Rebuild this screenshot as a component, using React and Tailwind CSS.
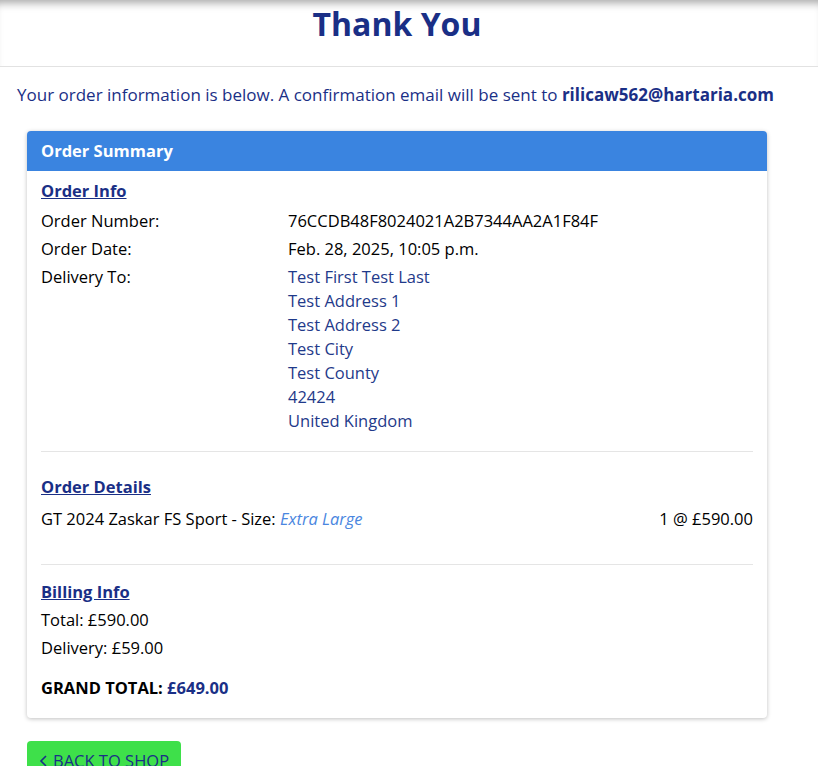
export default function App() {
  const address = ['Test First Test Last', 'Test Address 1', 'Test Address 2', 'Test City', 'Test County', '42424', 'United Kingdom'];

  return (
    <div className="min-h-[766px] bg-white text-black" style={{ fontFamily: '"Open Sans", "Noto Sans", sans-serif' }}>
      {/* title */}
      <div className="shadow-[inset_0_9px_8px_-6px_rgba(0,0,0,0.35)] border-b border-[#e2e2e2] h-[67px] pt-[2px] pr-[24px] text-center">
        <h1 className="text-[32px] font-bold text-[#1a2f86] leading-[44px]">Thank You</h1>
      </div>

      <p className="px-[17px] pt-[16px] text-[17px] text-[#1a2f86] leading-[24px] whitespace-nowrap">
        Your order information is below. A confirmation email will be sent to <strong className="font-bold">rilicaw562@hartaria.com</strong>
      </p>

      {/* card */}
      <div className="mx-[27px] mt-[24px] w-[740px] rounded-[4px] bg-white shadow-[0_1px_4px_rgba(0,0,0,0.25)] overflow-hidden">
        <div className="bg-[#3a84e0] h-[40px] px-[14px] flex items-center text-white font-bold text-[16.5px]">Order Summary</div>

        <div className="px-[14px] pt-[8px] pb-[16px] text-[16.5px]">
          <h2 className="text-[16.5px] font-bold text-[#1a2f86] underline leading-[24px]">Order Info</h2>
          <div className="mt-[4px] grid grid-cols-[247px_1fr] leading-[28px]">
            <span>Order Number:</span>
            <span>76CCDB48F8024021A2B7344AA2A1F84F</span>
            <span>Order Date:</span>
            <span className="font-medium">Feb. 28, 2025, 10:05 p.m.</span>
            <span>Delivery To:</span>
            <div className="text-[#1f3a8a] leading-[24px] pt-[2px]">
              {address.map((l) => <div key={l}>{l}</div>)}
            </div>
          </div>

          <hr className="mt-[18px] border-[#e5e5e5]" />

          <h2 className="mt-[23px] text-[16.5px] font-bold text-[#1a2f86] underline leading-[24px]">Order Details</h2>
          <div className="mt-[6px] flex justify-between leading-[28px]">
            <span>GT 2024 Zaskar FS Sport - Size: <em className="text-[#4a86e0]">Extra Large</em></span>
            <span>1 @ £590.00</span>
          </div>

          <hr className="mt-[31px] border-[#e5e5e5]" />

          <h2 className="mt-[15px] text-[16.5px] font-bold text-[#1a2f86] underline leading-[24px]">Billing Info</h2>
          <div className="mt-[2px] leading-[28px]">
            <div>Total: £590.00</div>
            <div>Delivery: £59.00</div>
            <div className="mt-[12px] font-bold">GRAND TOTAL: <span className="text-[#1a2f86]">£649.00</span></div>
          </div>
        </div>
      </div>

      <button className="ml-[27px] mt-[23px] h-[40px] w-[154px] pl-[12px] rounded-[4px] bg-[#3ee04a] text-[#1a2f86] text-[16.5px] flex items-center gap-[4px]">
        <svg width="10" height="14" viewBox="0 0 10 14" fill="none" stroke="currentColor" strokeWidth="1.6"><path d="M7 2 L2 7 L7 12" /></svg>
        BACK TO SHOP
      </button>
    </div>
  );
}
